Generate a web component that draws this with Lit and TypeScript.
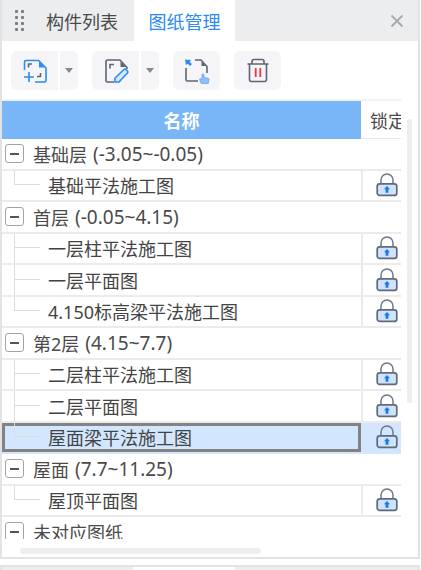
import { LitElement, html, css, svg } from "lit";
import { customElement } from "lit/decorators.js";

interface Row { label: string; range?: string; group?: boolean; selected?: boolean; more?: boolean; }

const ROWS: Row[] = [
  { label: "基础层", range: "(-3.05~-0.05)", group: true },
  { label: "基础平法施工图" },
  { label: "首层", range: "(-0.05~4.15)", group: true },
  { label: "一层柱平法施工图", more: true },
  { label: "一层平面图", more: true },
  { label: "4.150标高梁平法施工图" },
  { label: "第2层", range: "(4.15~7.7)", group: true },
  { label: "二层柱平法施工图", more: true },
  { label: "二层平面图", more: true },
  { label: "屋面梁平法施工图", selected: true },
  { label: "屋面", range: "(7.7~11.25)", group: true },
  { label: "屋顶平面图" },
  { label: "未对应图纸", group: true },
];

const lock = html`<svg class="lock" width="24" height="26" viewBox="0 0 24 26" fill="none">
  <path d="M6 13V8a6 6 0 0 1 12 0v5" stroke="#6f7889" stroke-width="1.5"/>
  <rect x="2.2" y="11.8" width="19.6" height="11.6" rx="2.5" fill="#cfe3fd" stroke="#5f6a7d" stroke-width="1.7"/>
  ${svg`<path d="M12 14l3 3.2h-1.6v3.6h-2.8v-3.6H9z" fill="#1878ea"/>`}
</svg>`;

@customElement("app-root")
export class AppRoot extends LitElement {
  static styles = css`
    :host { display: block; width: 421px; height: 570px; overflow: hidden; background: #fff;
      font-family: "Noto Sans", "Noto Sans CJK SC", sans-serif; color: #444; }
    .panel { box-sizing: border-box; width: 420px; height: 559px; border: solid #e3e3e3; border-width: 0 2px 2px;
      display: flex; flex-direction: column; position: relative; }
    .tabs { height: 41px; flex: none; background: #ecedef; display: flex; align-items: center; }
    .grip { display: grid; grid-template-columns: 3px 3px; gap: 3px; margin-left: 13px; width: 9px; }
    .grip i { width: 3px; height: 3px; background: #7d7d7d; border-radius: 1px; }
    .tab { height: 41px; display: flex; align-items: center; justify-content: center; font-size: 18px; box-sizing: border-box; }
    .tab.a { margin-left: 22px; width: 88px; justify-content: flex-start; color: #4a4a4a; }
    .tab.b { width: 101px; background: #fff; color: #2b8bf2; }
    .x { margin-left: auto; margin-right: 14px; display: block; }
    .tools { height: 58px; flex: none; display: flex; align-items: center; padding: 1px 0 0 9px; box-sizing: border-box; }
    .btn { width: 47px; height: 39px; background: #f5f5f7; display: flex; align-items: center; justify-content: center; border-radius: 6px; }
    .btn.l { border-radius: 6px 0 0 6px; }
    .dd { width: 18px; height: 39px; margin-left: 2px; background: #f5f5f7; border-radius: 0 6px 6px 0; display: flex; align-items: center; justify-content: center; }
    .dd i { width: 0; height: 0; border: 4px solid transparent; border-top: 5px solid #888; border-bottom: 0; }
    .g1 { margin-right: 14px; display: flex; }
    .table { flex: none; height: 438px; width: 399px; overflow: hidden; border-top: 2px solid #f2f2f2; box-sizing: content-box; }
    .head { height: 38px; display: flex; box-sizing: border-box; }
    .name { width: 359px; flex: none; background: #78b6f8; color: #fff; font-weight: 700; display: flex; align-items: center; justify-content: center; font-size: 18px; box-sizing: border-box; }
    .lockh { flex: 1; min-width: 0; overflow: hidden; white-space: nowrap; padding-left: 9px; display: flex; align-items: center; border-bottom: 1px solid #e6e6e6; font-size: 18px; color: #4a4a4a; }
    .row { height: 31.5px; box-sizing: border-box; border-bottom: 2px solid #ebebeb; display: flex; align-items: center; position: relative; font-size: 18px; white-space: nowrap; }
    .box { width: 19px; height: 19px; margin-left: 3px; box-sizing: border-box; border: 1.5px solid #a3a3a3; border-radius: 3px; display: flex; align-items: center; justify-content: center; flex: none; background: #fff; }
    .box i { width: 9px; height: 1.5px; background: #555; }
    .glabel { margin-left: 9px; color: #4a4a4a; }
    .range { margin-left: 6px; font-size: 19px; color: #4a4a4a; }
    .leaf .cell { flex: none; width: 359px; height: 100%; box-sizing: border-box; padding-left: 46px; display: flex; align-items: center; }
    .leaf .lk { flex: 1; height: 100%; border-left: 2px solid #ebebeb; box-sizing: border-box; display: flex; align-items: center; justify-content: center; padding-left: 10px; }
    .leaf::before { content: ""; position: absolute; left: 12px; top: 0; height: 50%; border-left: 1.5px solid #dcdcdc; }
    .leaf.more::before { height: 100%; }
    .leaf::after { content: ""; position: absolute; left: 12px; top: calc(50% - 1px); width: 26px; border-top: 1.5px solid #dcdcdc; }
    .sel { background: #d2e7fd; border-bottom-color: transparent; }
    .sel .cell { border: 3px solid #828282; padding-left: 43px; }
    .sel .lk { border-left: 0; padding-left: 12px; }
    .vbar { position: absolute; left: 405px; top: 119px; width: 5px; height: 284px; border-radius: 3px; background: #eeeeee; }
    .hbar { position: absolute; left: 18px; top: 548px; width: 241px; height: 6px; border-radius: 3px; background: #eeeeee; }
    .next { margin-top: 6px; height: 5px; width: 420px; box-sizing: border-box; border: solid #e3e3e3; border-width: 2px 2px 0; display: flex; background: #ecedef; }
    .next b { margin-left: 131px; width: 102px; background: #fff; }
  `;

  private toolIcons() {
    const blue = "#2b8bf2", dark = "#5d6472";
    return {
      add: html`<svg width="26" height="26" viewBox="0 0 26 26" fill="none" stroke-width="1.6">
        <path d="M2.5 12V4A1.5 1.5 0 0 1 4 2.5H16.5L24 10V22.5A1.5 1.5 0 0 1 22.5 24H13" stroke="${blue}"/>
        <path d="M17 3.5L22.8 9.6H17Z" fill="${blue}"/>
        <path d="M7 14V24M2 19H12" stroke="${blue}"/>
        <path d="M6.5 9.5V6H10M18.5 15V18.5H15" stroke="${dark}"/></svg>`,
      edit: html`<svg width="26" height="26" viewBox="0 0 26 26" fill="none" stroke-width="1.6">
        <path d="M11 24H4.5A1.5 1.5 0 0 1 3 22.5V3.5A1.5 1.5 0 0 1 4.5 2H17L24 9.5V11" stroke="${dark}"/>
        <path d="M17.5 3.5L22.6 9H17.5Z" fill="${dark}"/>
        <path d="M7 10.5V6.5H11" stroke="${dark}"/>
        <path d="M12 24V20L21 11.5A1.4 1.4 0 0 1 23 11.5L24.5 13A1.4 1.4 0 0 1 24.5 15L16 24Z" stroke="${blue}" fill="#d5e7fd"/></svg>`,
      move: html`<svg width="28" height="28" viewBox="0 0 28 28" fill="none" stroke-width="1.6">
        <path d="M3 11V22.5A1.5 1.5 0 0 0 4.5 24H15M12 3H18L24 9.5V16" stroke="${dark}"/>
        <path d="M18.5 4.5L22.6 9H18.5Z" fill="${dark}"/>
        <path d="M2 2.5L8 3L6.8 5L9 7L7 9L5 6.8L3 8Z" fill="${blue}"/>
        <path d="M18.2 26.5L16.6 22.6C16.3 21.7 17.5 21.2 18.1 21.9L19 23V18A1 1 0 0 1 21 18V20.6L25 21.2C25.8 21.4 26.2 22 26 22.8L25.2 26.5Z" fill="#8fc0f7" stroke="#5fa4f3" stroke-width=".8"/></svg>`,
      del: html`<svg width="24" height="26" viewBox="0 0 24 26" fill="none" stroke-width="1.6">
        <path d="M1.5 6H22.5M6 5.5V3.5A2 2 0 0 1 8 1.5H16A2 2 0 0 1 18 3.5V5.5" stroke="${dark}"/>
        <path d="M3.5 6V21.5A2 2 0 0 0 5.5 23.5H18.5A2 2 0 0 0 20.5 21.5V6" stroke="${dark}"/>
        <path d="M9.7 10V19M14.3 10V19" stroke="#f1343f" stroke-width="1.8"/></svg>`,
    };
  }

  private renderRow(r: Row) {
    if (r.group) {
      return html`<div class="row"><span class="box"><i></i></span><span class="glabel">${r.label}</span>${r.range ? html`<span class="range">${r.range}</span>` : ""}</div>`;
    }
    const cls = `row leaf ${r.more ? "more" : ""} ${r.selected ? "sel" : ""}`;
    return html`<div class=${cls}><div class="cell">${r.label}</div><div class="lk">${lock}</div></div>`;
  }

  render() {
    const ic = this.toolIcons();
    return html`
      <div class="panel">
        <div class="tabs">
          <div class="grip">${Array.from({ length: 8 }, () => html`<i></i>`)}</div>
          <div class="tab a">构件列表</div>
          <div class="tab b">图纸管理</div>
          <svg class="x" width="14" height="14" viewBox="0 0 14 14"><path d="M1.5 1.5L12.5 12.5M12.5 1.5L1.5 12.5" stroke="#a9a9a9" stroke-width="1.8"/></svg>
        </div>
        <div class="tools">
          <div class="g1"><div class="btn l">${ic.add}</div><div class="dd"><i></i></div></div>
          <div class="g1"><div class="btn l">${ic.edit}</div><div class="dd"><i></i></div></div>
          <div class="g1"><div class="btn">${ic.move}</div></div>
          <div class="btn">${ic.del}</div>
        </div>
        <div class="table">
          <div class="head"><div class="name">名称</div><div class="lockh">锁定</div></div>
          ${ROWS.map((r) => this.renderRow(r))}
        </div>
        <div class="vbar"></div>
        <div class="hbar"></div>
      </div>
      <div class="next"><b></b></div>
    `;
  }
}
